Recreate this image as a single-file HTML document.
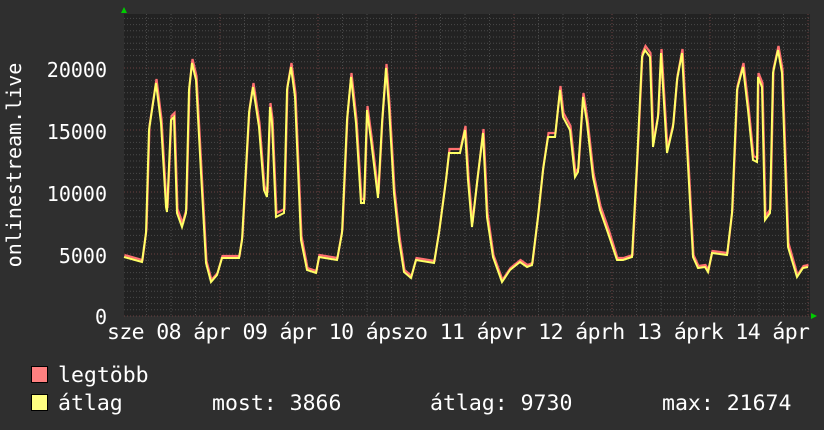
<!DOCTYPE html>
<html><head><meta charset="utf-8"><style>
html,body{margin:0;padding:0;background:#2f2f2f;}
svg{display:block}
text{font-family:"DejaVu Sans Mono","Liberation Mono",monospace;fill:#fff}
</style></head><body>
<svg id="s" width="824" height="430" xmlns="http://www.w3.org/2000/svg">
<rect width="824" height="430" fill="#2f2f2f"/>
<rect x="124" y="14" width="686" height="302" fill="#222"/>
<g id="grid"></g>
<polyline id="red" fill="none" stroke="#ff7070" stroke-width="2.2"/>
<polyline id="yel" fill="none" stroke="#ffff66" stroke-width="2"/>
<polygon points="121,13 127,13 124,7" fill="#00cc00"/>
<polygon points="811,313 811,319 817,316" fill="#00cc00"/>
<g font-size="20" text-anchor="end">
<text x="107" y="77">20000</text>
<text x="107" y="139">15000</text>
<text x="107" y="201">10000</text>
<text x="107" y="263">5000</text>
<text x="107" y="324">0</text>
</g>
<text transform="translate(21,165) rotate(-90)" font-size="20" text-anchor="middle">onlinestream.live</text>
<text x="107" y="339" font-size="21.5" textLength="703" lengthAdjust="spacing">sze 08 ápr 09 ápr 10 ápszo 11 ápvr 12 áprh 13 áprk 14 ápr</text>
<rect x="31.5" y="366.5" width="16" height="16" fill="#ff8080" stroke="#000"/>
<rect x="31.5" y="394.5" width="16" height="16" fill="#ffff80" stroke="#000"/>
<g font-size="21.5">
<text x="58" y="382">legtöbb</text>
<text x="58" y="410">átlag</text>
<text x="212" y="410">most: 3866</text>
<text x="430" y="410">átlag: 9730</text>
<text x="662" y="410">max: 21674</text>
</g>
</svg>
<script>
var g=document.getElementById('grid'),h='';
for(var y=316;y>14;y-=6.2){var maj=Math.abs(((316-y)/62)-Math.round((316-y)/62))<0.05;
h+='<line x1="124" x2="810" y1="'+y.toFixed(1)+'" y2="'+y.toFixed(1)+'" stroke="'+(maj?'#6a4040':'#4a4a4a')+'" stroke-dasharray="1,2"/>';}
for(var x=146.5;x<810;x+=24.5){var d=Math.abs(((x-218)/98)-Math.round((x-218)/98))<0.05;
h+='<line y1="14" y2="316" x1="'+x.toFixed(1)+'" x2="'+x.toFixed(1)+'" stroke="'+(d?'#6a4040':'#4a4a4a')+'" stroke-dasharray="1,2"/>';}
g.innerHTML=h;
var p=[124,257,142,262,146,233,149,130,156,83,161,123,166,207,167,212,171,120,174,117,177,213,182,227,186,213,189,90,192,63,196,80,201,173,206,263,211,282,217,275,222,258,239,258,242,240,249,113,253,87,259,127,264,190,267,197,270,107,272,123,276,217,284,213,287,90,291,67,295,97,301,240,307,270,316,273,319,257,337,260,342,233,347,120,351,77,356,123,361,203,364,203,367,110,371,140,378,198,382,123,386,68,389,107,394,193,399,240,404,272,411,278,416,260,434,263,439,233,446,180,449,153,460,153,465,130,468,180,472,227,477,183,483,133,487,217,493,257,502,282,510,270,520,262,527,267,532,265,538,217,543,170,548,137,555,137,560,90,563,117,570,130,575,177,578,172,583,97,587,123,593,177,600,210,608,233,617,260,623,260,632,257,637,163,642,57,645,50,650,57,653,147,658,117,661,53,667,153,673,127,677,80,682,53,687,147,693,257,698,268,705,267,708,272,712,253,727,255,732,213,737,90,743,67,748,110,753,160,757,162,758,77,762,87,765,220,770,213,773,73,778,50,782,73,788,247,797,277,803,268,808,267];
var a='',b='';for(var i=0;i<p.length;i+=2){a+=p[i]+','+p[i+1]+' ';b+=(p[i]+0.5)+','+(p[i+1]-(p[i+1]<250?4:2))+' ';}
document.getElementById('yel').setAttribute('points',a);
document.getElementById('red').setAttribute('points',b);
</script>
</body></html>
